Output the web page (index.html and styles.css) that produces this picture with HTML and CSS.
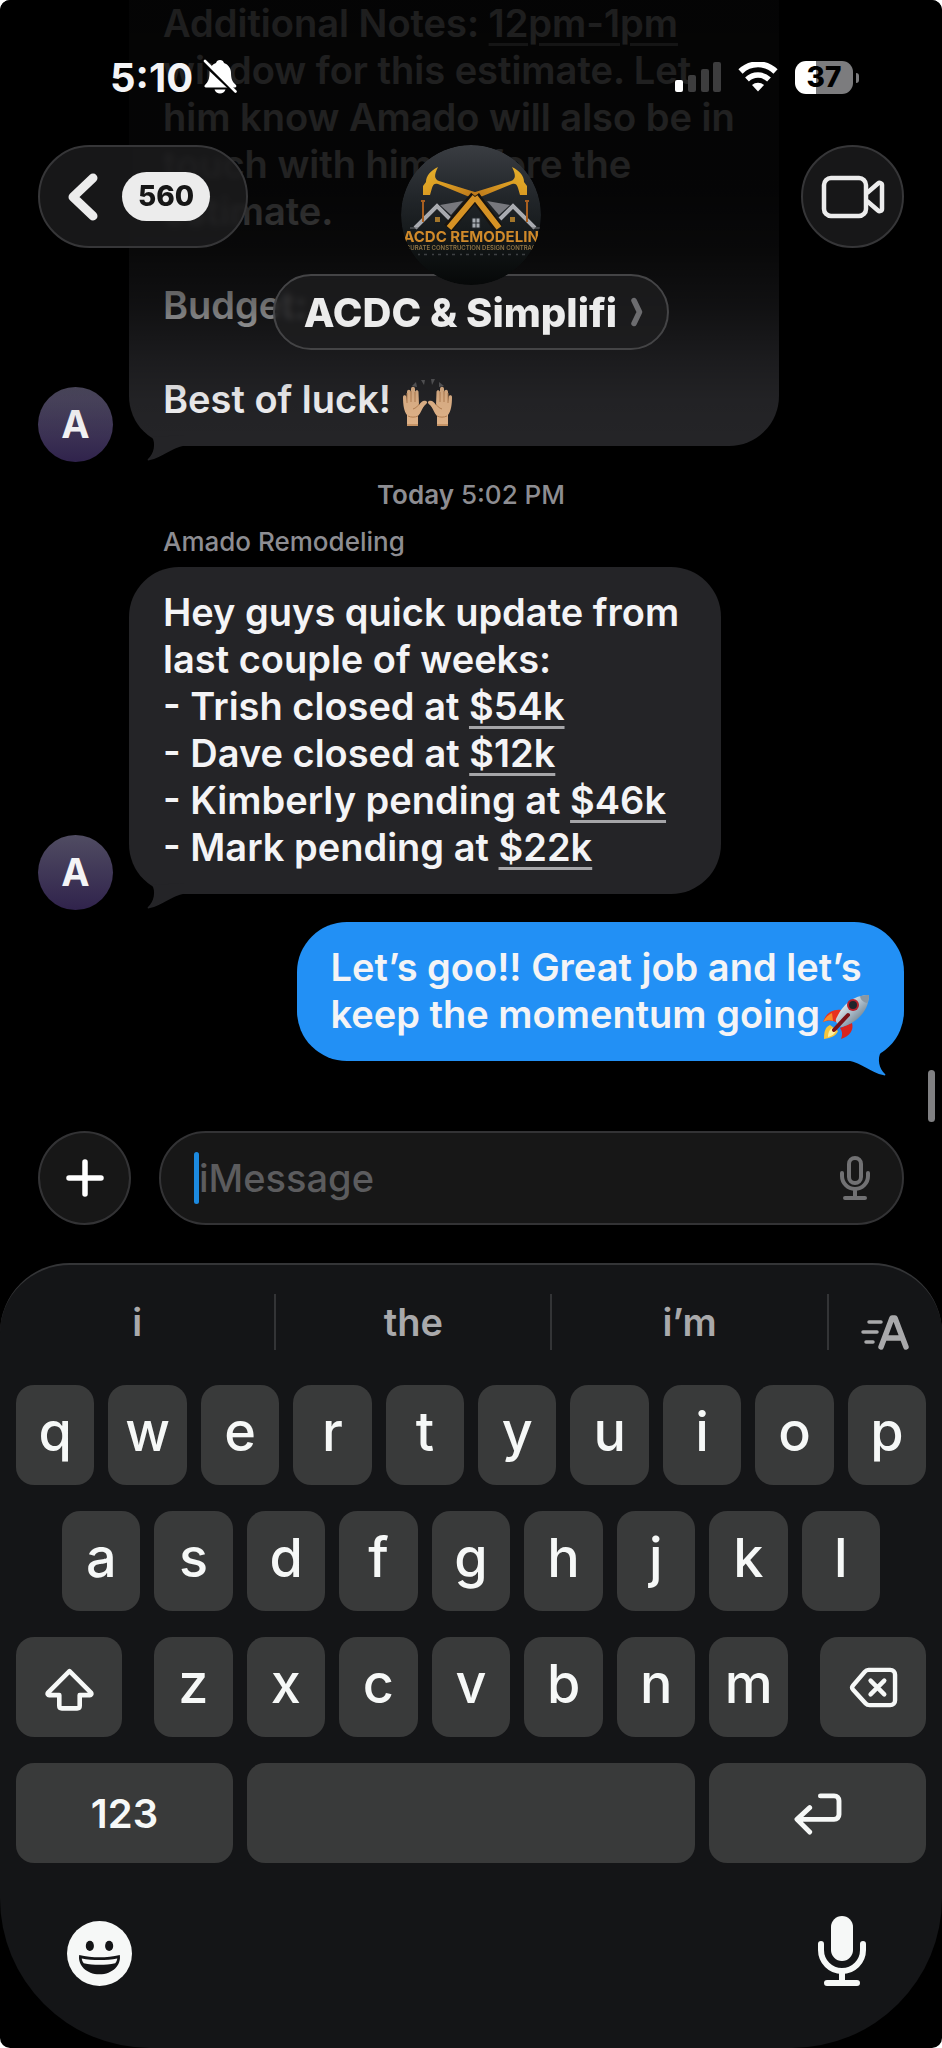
FILE: index.html
```html
<!DOCTYPE html>
<html lang="en">
<head>
    <meta charset="UTF-8">
    <meta name="viewport" content="width=device-width, initial-scale=1.0">
    <title>ACDC &amp; Simplifi</title>
    <link rel="stylesheet" href="styles.css">
</head>
<body>
    <div class="phone">
        <header class="top">
            <div class="status">
                <div class="status-left">
                    <span class="time">5:10</span>
                    <svg class="bell" viewBox="0 0 34 36" aria-hidden="true">
                        <path d="M17 1c2 0 3.500 1.200 4 3 4.500 1.500 7 5.500 7 10 0 6 1.500 9 5 12 .8 1 .2 2.500-1 2.500H3C1.500 28.500.8 27 2 26c3-3 4.500-6 4.500-12 0-4.500 2-8.500 6.500-10 .5-1.800 2-3 4-3zM11.500 30.500h11c-.8 2.500-3 4-5.500 4s-4.700-1.500-5.500-4z" fill="#fff"/>
                        <path d="M1 5l33 31" stroke="#030303" stroke-width="3"/>
                        <path d="M2 2l30.500 30.500" stroke="#fff" stroke-width="2.600" stroke-linecap="round"/>
                    </svg>
                </div>
                <div class="status-right">
                    <svg class="signal" viewBox="0 0 46 30" aria-hidden="true">
                        <rect x="0" y="18" width="8" height="12" rx="2" fill="#fff"/>
                        <rect x="13" y="13" width="8" height="17" rx="2" fill="#3d3d3e"/>
                        <rect x="26" y="7" width="8" height="23" rx="2" fill="#3d3d3e"/>
                        <rect x="38" y="0" width="8" height="30" rx="2" fill="#3d3d3e"/>
                    </svg>
                    <svg class="wifi" viewBox="0 0 40 30" aria-hidden="true">
                        <path d="M2.500 9.500a25 25 0 0 1 35 0" fill="none" stroke="#fff" stroke-width="6"/>
                        <path d="M9 17.500a16 16 0 0 1 22 0" fill="none" stroke="#fff" stroke-width="5.500"/>
                        <path d="M20 29.500l-6-6.500a9 9 0 0 1 12 0z" fill="#fff"/>
                    </svg>
                    <div class="battery"><span>37</span></div>
                </div>
            </div>

            <nav class="nav">
                <button class="glass back" type="button" aria-label="Back">
                    <svg class="back-arrow" viewBox="0 0 30 48" aria-hidden="true">
                        <path d="M25 5L5 24l20 19" fill="none" stroke="#ececec" stroke-width="9" stroke-linecap="round" stroke-linejoin="round"/>
                    </svg>
                    <span class="unread">560</span>
                </button>

                <div class="contact">
                    <svg class="group-photo" viewBox="0 0 140 140" role="img" aria-label="ACDC Remodeling logo">
                        <defs>
                            <linearGradient id="photoBg" x1="0" y1="0" x2="0" y2="1">
                                <stop offset="0" stop-color="#3a3d42"/>
                                <stop offset="0.35" stop-color="#23272b"/>
                                <stop offset="0.7" stop-color="#121617"/>
                                <stop offset="1" stop-color="#060808"/>
                            </linearGradient>
                            <linearGradient id="gold" x1="0" y1="0" x2="1" y2="1">
                                <stop offset="0" stop-color="#e8b32c"/>
                                <stop offset="0.5" stop-color="#d99a22"/>
                                <stop offset="1" stop-color="#b8731a"/>
                            </linearGradient>
                            <clipPath id="photoClip"><circle cx="70" cy="70" r="70"/></clipPath>
                            <g id="logoHalf">
                                <path d="M39 60l23-4-12 14z" fill="#77787d"/>
                                <path d="M14 83l22-22 13 13" fill="none" stroke="#a9abb0" stroke-width="4"/>
                                <path d="M9 83h8" stroke="#6e7074" stroke-width="1"/>
                                <path d="M34 72h5v5h-5z" fill="#a3762a"/>
                                <path d="M22 56v21M20 56h4" stroke="#a85f20" stroke-width="2"/>
                                <path d="M37 22c-8 4-12 9-12 15l-3 4v9h7l2-7c1-4 3-5 6-4l34 14 6-5-39-12c-5-2-5-6-1-14z" fill="url(#gold)"/>
                            </g>
                        </defs>
                        <g clip-path="url(#photoClip)">
                            <circle cx="70" cy="70" r="70" fill="url(#photoBg)"/>
                            <use href="#logoHalf"/>
                            <use href="#logoHalf" transform="translate(148 0) scale(-1 1)"/>
                            <path d="M74 51L47 83M74 51l23 32" stroke="#181410" stroke-width="10"/>
                            <path d="M74 52L48 83M74 52l24 31" stroke="#d69224" stroke-width="6"/>
                            <path d="M71 73h8v10h-8zM75 73v10M71 78h8" fill="#a5aab0" stroke="#25292d" stroke-width="1"/>
                            <text class="logo-name" x="70" y="97" text-anchor="middle">ACDC REMODELIN</text>
                            <text class="logo-sub" x="70" y="105" text-anchor="middle">CURATE CONSTRUCTION DESIGN CONTRAC</text>
                            <path d="M17 109.500h108" stroke="#3e4143" stroke-width="1.500" stroke-dasharray="2 4 3 5"/>
                        </g>
                    </svg>
                    <button class="glass contact-name" type="button">
                        <span>ACDC &amp; Simplifi</span>
                        <svg class="name-arrow" viewBox="0 0 12 30" aria-hidden="true">
                            <path d="M3 3.500L8.500 15 3 26.500" fill="none" stroke="#6c6c6f" stroke-width="5.500" stroke-linecap="round" stroke-linejoin="round"/>
                        </svg>
                    </button>
                </div>

                <button class="glass video" type="button" aria-label="Video call">
                    <svg class="video-icon" viewBox="0 0 64 44" aria-hidden="true">
                        <g fill="none" stroke="#ececec" stroke-width="4.500" stroke-linejoin="round">
                            <rect x="3" y="3" width="42" height="38" rx="7"/>
                            <path d="M46 18L57 8.500c1.500-1.300 4-.5 4 1.500v24c0 2-2.500 2.800-4 1.500L46 26"/>
                        </g>
                    </svg>
                </button>
            </nav>
        </header>

        <main class="thread">
            <div class="row">
                <div class="avatar">A</div>
                <div class="bubble received cut">
                    Additional Notes: <a href="#">12pm-1pm</a><br>
                    window for this estimate. Let<br>
                    him know Amado will also be in<br>
                    touch with him before the<br>
                    estimate.<br>
                    <br>
                    Budget:<br>
                    <br>
                    Best of luck!
                    <svg class="hands" viewBox="0 0 50 48" role="img" aria-label="Raising hands">
                        <g fill="#5b5b5e">
                            <path d="M9 7l4-4 1 5zM18 1l4 0-1 5zM28 0h4l-3 6zM36 3l5 4-5 1z"/>
                        </g>
                        <g id="hand">
                            <path d="M4 47V36C1 32 0 26 0 18c0-2.500 3-2.500 3.500 0l.5 5V13c0-3 3.500-3 4 0V10c0-3 4-3 4 0v3c.5-2.500 3.500-2.500 3.500 0l.5 13c2-3 4-5 7-4 2 1 1 2.500-1 4-3 3-4 8-7 11v10z" fill="#e3b58a"/>
                            <path d="M4 24V14M8 23V12M12 23V13M5 37c3 1.500 7 1.500 10 0M10 30c3-1 5-3 6-5" fill="none" stroke="#b88255" stroke-width="1"/>
                            <path d="M4 45h11v2H4z" fill="#c99566"/>
                        </g>
                        <use href="#hand" transform="translate(49 0) scale(-1 1)"/>
                    </svg>
                    <svg class="tail" viewBox="0 0 42 28" aria-hidden="true">
                        <path d="M7 4C11 10 9 21 3 26c-1 1 0 2 2 1C16 25 26 15 40 12.500V2z" fill="currentColor"/>
                    </svg>
                </div>
            </div>

            <p class="stamp"><b>Today</b> 5:02 PM</p>
            <p class="sender">Amado Remodeling</p>

            <div class="row">
                <div class="avatar">A</div>
                <div class="bubble received">
                    Hey guys quick update from<br>
                    last couple of weeks:<br>
                    - Trish closed at <a href="#">$54k</a><br>
                    - Dave closed at <a href="#">$12k</a><br>
                    - Kimberly pending at <a href="#">$46k</a><br>
                    - Mark pending at <a href="#">$22k</a>
                    <svg class="tail" viewBox="0 0 42 28" aria-hidden="true">
                        <path d="M7 4C11 10 9 21 3 26c-1 1 0 2 2 1C16 25 26 15 40 12.500V2z" fill="currentColor"/>
                    </svg>
                </div>
            </div>

            <div class="row mine">
                <div class="bubble sent">
                    Let’s goo!! Great job and let’s<br>
                    keep the momentum going<svg class="rocket" viewBox="0 0 48 46" role="img" aria-label="Rocket">
                        <defs>
                            <linearGradient id="hull" x1="0" y1="0" x2="1" y2="1">
                                <stop offset="0.2" stop-color="#f0f5f8"/>
                                <stop offset="0.55" stop-color="#9fb1bf"/>
                                <stop offset="1" stop-color="#46545f"/>
                            </linearGradient>
                        </defs>
                        <path d="M8 31c-5 2-6 7-6 14 7-1 12-3 14-8z" fill="#f6c53a"/>
                        <path d="M10 34c-3 2-4 5-4 9 4-1 7-3 8-6z" fill="#fdf0a0"/>
                        <path d="M19 16C11 15 4 19 1 28c5-2 9-2 13 0z" fill="#e8321f"/>
                        <path d="M10 19c-4 2-7 5-9 9 4-2 7-2 10-1z" fill="#f68a2a"/>
                        <path d="M30 29c2 7-2 13-11 16 2-5 1-8-1-11z" fill="#d9241f"/>
                        <path d="M47 1C35 1 22 7 14 25c-1 3 3 8 6 8C37 28 47 15 47 1z" fill="url(#hull)"/>
                        <path d="M47 1c-3 0-6 .3-9 1.300 1 4 3 6 7.500 6.700C46.500 6 47 3.500 47 1z" fill="#8b98a3"/>
                        <circle cx="31" cy="11" r="6" fill="#b5202c"/>
                        <circle cx="31" cy="11" r="4" fill="#20242b"/>
                        <path d="M26 21L12 36" stroke="#7b1117" stroke-width="4" stroke-linecap="round"/>
                    </svg>
                    <svg class="tail" viewBox="0 0 42 28" aria-hidden="true">
                        <path d="M7 4C11 10 9 21 3 26c-1 1 0 2 2 1C16 25 26 15 40 12.500V2z" fill="currentColor"/>
                    </svg>
                </div>
            </div>
            <span class="scrollbar"></span>
        </main>

        <form class="composer">
            <button class="round-btn" type="button" aria-label="Add attachment">
                <svg class="plus" viewBox="0 0 38 38" aria-hidden="true">
                    <path d="M19 3v32M3 19h32" stroke="#fff" stroke-width="5.500" stroke-linecap="round"/>
                </svg>
            </button>
            <div class="field">
                <span class="caret"></span>
                <input type="text" id="message" name="message" placeholder="iMessage" aria-label="iMessage">
                <button class="plain-btn" type="button" aria-label="Record audio">
                    <svg class="mic-small" viewBox="0 0 32 46" aria-hidden="true">
                        <g fill="none" stroke="#717173" stroke-width="4" stroke-linecap="round">
                            <rect x="10" y="3" width="12" height="25" rx="6"/>
                            <path d="M3 18v3a13 13 0 0 0 26 0v-3M16 35v7M6 43h20"/>
                        </g>
                    </svg>
                </button>
            </div>
        </form>

        <section class="keyboard">
            <div class="suggestions">
                <button type="button">i</button>
                <button type="button">the</button>
                <button type="button">i’m</button>
                <button type="button" class="format" aria-label="Text effects">
                    <svg class="format-icon" viewBox="0 0 48 36" aria-hidden="true">
                        <g fill="none" stroke="#a9a9ab" stroke-linecap="round" stroke-linejoin="round">
                            <path d="M8 8h12M2 18h14M5 28h7" stroke-width="3.500"/>
                            <path d="M20 33L31 4h3l11 29M25 24h15" stroke-width="5.500"/>
                        </g>
                    </svg>
                </button>
            </div>

            <div class="keys">
                <div class="key-row">
                    <button type="button">q</button>
                    <button type="button">w</button>
                    <button type="button">e</button>
                    <button type="button">r</button>
                    <button type="button">t</button>
                    <button type="button">y</button>
                    <button type="button">u</button>
                    <button type="button">i</button>
                    <button type="button">o</button>
                    <button type="button">p</button>
                </div>
                <div class="key-row middle">
                    <button type="button">a</button>
                    <button type="button">s</button>
                    <button type="button">d</button>
                    <button type="button">f</button>
                    <button type="button">g</button>
                    <button type="button">h</button>
                    <button type="button">j</button>
                    <button type="button">k</button>
                    <button type="button">l</button>
                </div>
                <div class="key-row">
                    <button type="button" class="shift" aria-label="Shift">
                        <svg class="key-icon" viewBox="0 0 48 42" aria-hidden="true">
                            <path d="M24 3L3 24c-1 1.500 0 2.500 1 2.500h10V37c0 1.500 1 2.500 2.500 2.500h15c1.500 0 2.500-1 2.500-2.500V26.500h10c1 0 2-1 1-2.500z" fill="none" stroke="#f6f8f7" stroke-width="4.500" stroke-linejoin="round"/>
                        </svg>
                    </button>
                    <button type="button">z</button>
                    <button type="button">x</button>
                    <button type="button">c</button>
                    <button type="button">v</button>
                    <button type="button">b</button>
                    <button type="button">n</button>
                    <button type="button">m</button>
                    <button type="button" class="delete" aria-label="Delete">
                        <svg class="key-icon" viewBox="0 0 50 42" aria-hidden="true">
                            <g fill="none" stroke="#f6f8f7" stroke-width="4.500" stroke-linecap="round" stroke-linejoin="round">
                                <path d="M20 3h22c3 0 5 2 5 5v26c0 3-2 5-5 5H21c-1.500 0-3-.6-4-1.700L4 23c-1-1.200-1-2.800 0-4L16 5c1-1.200 2.500-2 4-2z"/>
                                <path d="M22 14l14 14M36 14L22 28"/>
                            </g>
                        </svg>
                    </button>
                </div>
                <div class="key-row">
                    <button type="button" class="wide">123</button>
                    <button type="button" class="space" aria-label="Space"></button>
                    <button type="button" class="wide" aria-label="Return">
                        <svg class="key-icon" viewBox="0 0 50 44" aria-hidden="true">
                            <path d="M28 4h14c3 0 5 2 5 5v14c0 3-2 5-5 5H5M17 16L4 28l13 13" fill="none" stroke="#f6f8f7" stroke-width="5" stroke-linecap="round" stroke-linejoin="round"/>
                        </svg>
                    </button>
                </div>
            </div>

            <div class="keyboard-foot">
                <button class="plain-btn" type="button" aria-label="Emoji">
                    <svg class="smile" viewBox="0 0 64 64" aria-hidden="true">
                        <circle cx="32" cy="32" r="32" fill="#f6f8f7"/>
                        <ellipse cx="22.500" cy="24.500" rx="4" ry="5" fill="#141517"/>
                        <ellipse cx="41.500" cy="24.500" rx="4" ry="5" fill="#141517"/>
                        <path d="M12 33.500c13 3 27 3 40 0 1.500 10-7 19-20 19s-21.500-9-20-19z" fill="#141517"/>
                        <path d="M14.500 37c11 2 24 2 35 0-.3 2-1 3.500-2 4.500-10 2-21 2-31 0-1-1-1.700-2.500-2-4.500z" fill="#f6f8f7"/>
                    </svg>
                </button>
                <button class="plain-btn" type="button" aria-label="Dictate">
                    <svg class="mic" viewBox="0 0 50 70" aria-hidden="true">
                        <rect x="14" y="0" width="22" height="45" rx="11" fill="#f6f8f7"/>
                        <path d="M4 28v6a21 21 0 0 0 42 0v-6M25 56v10M10 67h30" fill="none" stroke="#f6f8f7" stroke-width="6" stroke-linecap="round"/>
                    </svg>
                </button>
            </div>
        </section>
    </div>
</body>
</html>
```
FILE: styles.css
```css
* {
    box-sizing: border-box;
}
body {
    margin: 0;
    background-color: #fff;
    font-family: Inter, "Liberation Sans", sans-serif;
    color: #f4f4f6;
}
button {
    font-family: inherit;
    color: inherit;
    border: none;
    padding: 0;
    background: none;
    cursor: pointer;
}
svg {
    display: block;
    flex: none;
}
p {
    margin: 0;
}
.phone {
    position: relative;
    display: flex;
    flex-direction: column;
    min-height: 100vh;
    background-color: #000;
    border-radius: 10px;
    overflow: hidden;
}

/* header floats over the scrolled messages */
.top {
    position: absolute;
    top: 0;
    left: 0;
    right: 0;
    z-index: 2;
    height: 440px;
    padding: 52px 38px 0;
    background: linear-gradient(rgba(0, 0, 0, 0.88) 0, rgba(0, 0, 0, 0.86) 190px, rgba(0, 0, 0, 0.76) 250px, rgba(0, 0, 0, 0.54) 306px, rgba(0, 0, 0, 0.24) 360px, rgba(0, 0, 0, 0.06) 400px, rgba(0, 0, 0, 0) 440px);
}
.status {
    display: flex;
    justify-content: space-between;
    align-items: center;
    height: 50px;
    padding: 0 45px 0 72px;
}
.status-left,
.status-right {
    display: flex;
    align-items: center;
}
.status-left {
    gap: 10px;
}
.status-right {
    gap: 17px;
}
.time {
    font-size: 40px;
    font-weight: 700;
}
.bell {
    width: 34px;
    height: 36px;
}
.signal {
    width: 46px;
    height: 30px;
}
.wifi {
    width: 40px;
    height: 30px;
}
.battery {
    position: relative;
    width: 58px;
    height: 33px;
    margin-right: 6px;
    border-radius: 11px;
    background: linear-gradient(90deg, #fff 37%, #7c7c7e 37%);
    color: #000;
    font-size: 28px;
    font-weight: 800;
    line-height: 33px;
    text-align: center;
}
.battery::after {
    content: "";
    position: absolute;
    right: -6px;
    top: 12px;
    width: 3px;
    height: 10px;
    border-radius: 0 3px 3px 0;
    background-color: #7c7c7e;
}
.nav {
    display: grid;
    grid-template-columns: 1fr auto 1fr;
    align-items: start;
    padding-top: 43px;
}
.glass {
    display: flex;
    align-items: center;
    border: 2px solid #363638;
    background-color: rgba(30, 30, 31, 0.76);
    backdrop-filter: blur(3px);
}
.back {
    justify-self: start;
    gap: 24px;
    height: 103px;
    padding: 0 36px 0 28px;
    border-radius: 52px;
}
.back-arrow {
    width: 30px;
    height: 48px;
}
.unread {
    padding: 0 16px;
    border-radius: 25px;
    background-color: #ececec;
    color: #161616;
    font-size: 28px;
    font-weight: 800;
    line-height: 49px;
}
.contact {
    display: flex;
    flex-direction: column;
    align-items: center;
}
.group-photo {
    position: relative;
    z-index: 1;
    width: 140px;
    height: 140px;
    margin-bottom: -11px;
}
.logo-name {
    font-size: 15px;
    font-weight: 700;
    fill: #d08a2a;
}
.logo-sub {
    font-size: 6px;
    font-weight: 600;
    fill: #8f7546;
}
.contact-name {
    gap: 14px;
    height: 76px;
    padding: 0 24px 0 29px;
    border-radius: 38px;
    border-color: #444446;
    color: #ececec;
    font-size: 40px;
    font-weight: 800;
}
.name-arrow {
    width: 12px;
    height: 30px;
}
.video {
    justify-self: end;
    justify-content: center;
    width: 103px;
    height: 103px;
    border-radius: 50%;
}
.video-icon {
    width: 64px;
    height: 44px;
}

.thread {
    position: relative;
    flex: 1;
    font-size: 38px;
    font-weight: 600;
    line-height: 47px;
}
.row {
    display: flex;
    align-items: flex-end;
    gap: 16px;
    padding: 0 38px;
}
.mine {
    justify-content: flex-end;
    padding-top: 12px;
}
.avatar {
    flex: none;
    width: 75px;
    height: 75px;
    border-radius: 50%;
    background: linear-gradient(#504c62, #30234c);
    font-size: 38px;
    font-weight: 700;
    line-height: 75px;
    text-align: center;
}
.bubble {
    position: relative;
    margin-bottom: 16px;
    padding: 22px 34px 23px;
    border-radius: 50px;
}
.bubble a {
    color: inherit;
    text-decoration-thickness: 3px;
    text-underline-offset: 6px;
    text-decoration-color: #a5a5a8;
}
.received {
    padding-right: 42px;
    background-color: #242427;
}
.cut {
    width: 75%;
    padding-top: 0;
    border-radius: 0 0 50px 50px;
}
.sent {
    background-color: #2290f5;
}
.tail {
    position: absolute;
    left: 16px;
    bottom: -15px;
    width: 42px;
    height: 28px;
    color: #242427;
}
.sent .tail {
    left: auto;
    right: 16px;
    color: #2290f5;
    transform: scaleX(-1);
}
.hands,
.rocket {
    display: inline-block;
    margin-top: -4px;
    margin-bottom: -4px;
}
.hands {
    width: 50px;
    height: 48px;
    margin-left: 2px;
    vertical-align: -10px;
}
.rocket {
    width: 48px;
    height: 46px;
    margin-left: 2px;
    vertical-align: -8px;
}
.stamp,
.sender {
    color: #8d8d92;
    font-size: 26px;
    font-weight: 500;
}
.stamp {
    padding-top: 9px;
    text-align: center;
}
.stamp b {
    font-weight: 600;
}
.sender {
    padding: 0 163px 2px;
}
.scrollbar {
    position: absolute;
    right: 7px;
    bottom: 9px;
    width: 7px;
    height: 52px;
    border-radius: 4px;
    background-color: #808082;
}

.composer {
    display: flex;
    gap: 28px;
    padding: 0 38px 38px;
}
.round-btn,
.field {
    height: 94px;
    border: 2px solid #333335;
    background-color: #171717;
}
.round-btn {
    display: flex;
    align-items: center;
    justify-content: center;
    flex: none;
    width: 93px;
    border-radius: 50%;
}
.plus {
    width: 38px;
    height: 38px;
}
.field {
    display: flex;
    align-items: center;
    flex: 1;
    padding: 0 31px 0 33px;
    border-radius: 47px;
}
.caret {
    flex: none;
    width: 5px;
    height: 52px;
    border-radius: 3px;
    background-color: #1c8ae0;
}
.field input {
    flex: 1;
    min-width: 0;
    padding: 0;
    border: none;
    outline: none;
    background: none;
    color: #fff;
    font-family: inherit;
    font-size: 38px;
    font-weight: 500;
}
.field input::placeholder {
    color: #5c5c5e;
    opacity: 1;
}
.mic-small {
    width: 32px;
    height: 46px;
}

.keyboard {
    padding: 0 16px 62px;
    border-top: 2px solid #343537;
    border-radius: 70px 70px 150px 150px;
    background-color: #141517;
}
.suggestions {
    display: flex;
    align-items: center;
    height: 120px;
    margin: 0 -16px;
    padding-bottom: 6px;
}
.suggestions button {
    flex: 276;
    height: 56px;
    border-right: 2px solid #333436;
    color: #a9a9ab;
    font-size: 38px;
    font-weight: 600;
}
.suggestions .format {
    display: flex;
    flex: 114;
    align-items: flex-end;
    justify-content: center;
    border: none;
}
.format-icon {
    width: 48px;
    height: 36px;
}
.keys {
    display: flex;
    flex-direction: column;
    gap: 26px;
}
.key-row {
    display: flex;
    gap: 14px;
}
.key-row button {
    display: flex;
    align-items: center;
    justify-content: center;
    flex: 1;
    min-width: 0;
    height: 100px;
    padding-bottom: 8px;
    border-radius: 18px;
    background-color: #393a3a;
    color: #f6f8f7;
    font-size: 54px;
    font-weight: 500;
}
.middle {
    padding: 0 46px;
}
.key-row .shift,
.key-row .delete {
    flex: none;
    width: 106px;
    padding-bottom: 0;
}
.key-row .shift {
    margin-right: 18px;
    padding-top: 4px;
}
.key-row .delete {
    margin-left: 18px;
}
.key-row .wide {
    flex: 217;
    padding-bottom: 0;
    font-size: 40px;
    font-weight: 600;
}
.key-row .space {
    flex: 448;
}
.key-icon {
    width: 49px;
    height: 43px;
}
.keyboard-foot {
    display: flex;
    justify-content: space-between;
    align-items: flex-end;
    padding: 53px 59px 0 51px;
}
.smile {
    width: 65px;
    height: 65px;
}
.mic {
    width: 50px;
    height: 70px;
}
```
